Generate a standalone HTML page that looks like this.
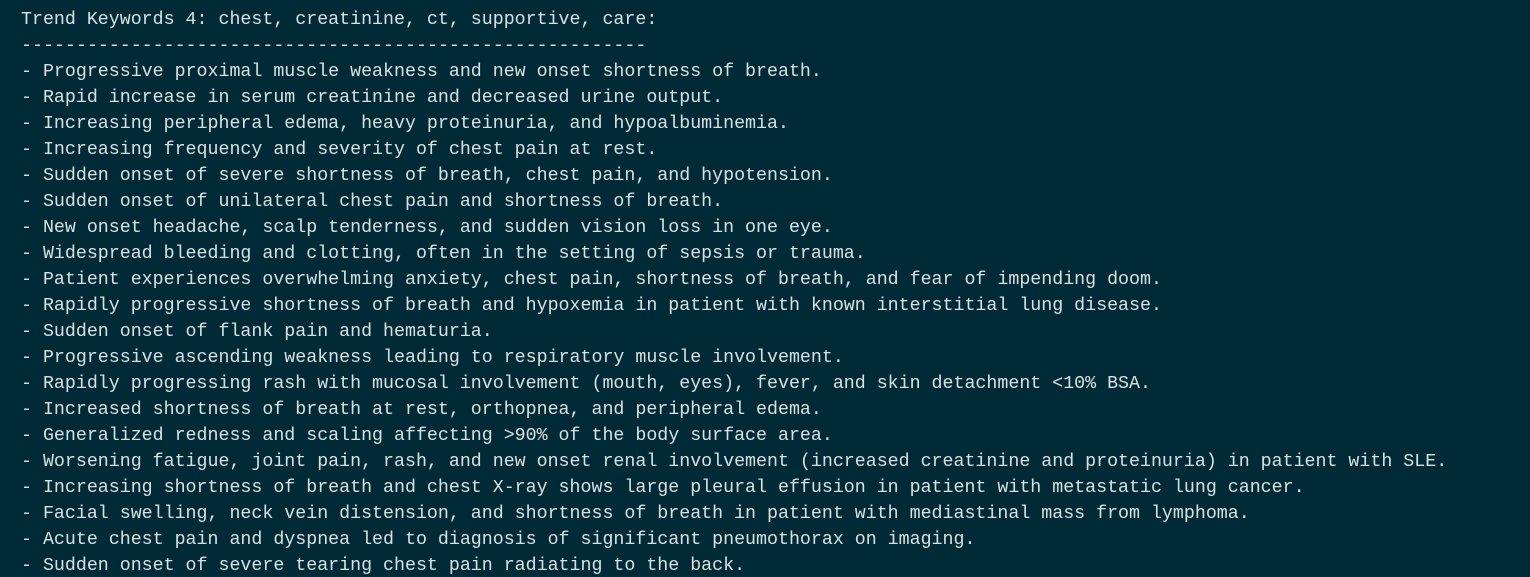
<!DOCTYPE html>
<html><head><meta charset="utf-8"><style>
html,body{margin:0;padding:0;background:#002b36;width:1530px;height:577px;overflow:hidden}
pre{margin:0;padding:7px 0 0 21px;font-family:"Liberation Mono",monospace;font-size:18.3px;line-height:26px;color:#d9e0e3;white-space:pre}
</style></head><body><pre>Trend Keywords 4: chest, creatinine, ct, supportive, care:
---------------------------------------------------------
- Progressive proximal muscle weakness and new onset shortness of breath.
- Rapid increase in serum creatinine and decreased urine output.
- Increasing peripheral edema, heavy proteinuria, and hypoalbuminemia.
- Increasing frequency and severity of chest pain at rest.
- Sudden onset of severe shortness of breath, chest pain, and hypotension.
- Sudden onset of unilateral chest pain and shortness of breath.
- New onset headache, scalp tenderness, and sudden vision loss in one eye.
- Widespread bleeding and clotting, often in the setting of sepsis or trauma.
- Patient experiences overwhelming anxiety, chest pain, shortness of breath, and fear of impending doom.
- Rapidly progressive shortness of breath and hypoxemia in patient with known interstitial lung disease.
- Sudden onset of flank pain and hematuria.
- Progressive ascending weakness leading to respiratory muscle involvement.
- Rapidly progressing rash with mucosal involvement (mouth, eyes), fever, and skin detachment &lt;10% BSA.
- Increased shortness of breath at rest, orthopnea, and peripheral edema.
- Generalized redness and scaling affecting &gt;90% of the body surface area.
- Worsening fatigue, joint pain, rash, and new onset renal involvement (increased creatinine and proteinuria) in patient with SLE.
- Increasing shortness of breath and chest X-ray shows large pleural effusion in patient with metastatic lung cancer.
- Facial swelling, neck vein distension, and shortness of breath in patient with mediastinal mass from lymphoma.
- Acute chest pain and dyspnea led to diagnosis of significant pneumothorax on imaging.
- Sudden onset of severe tearing chest pain radiating to the back.
</pre></body></html>
